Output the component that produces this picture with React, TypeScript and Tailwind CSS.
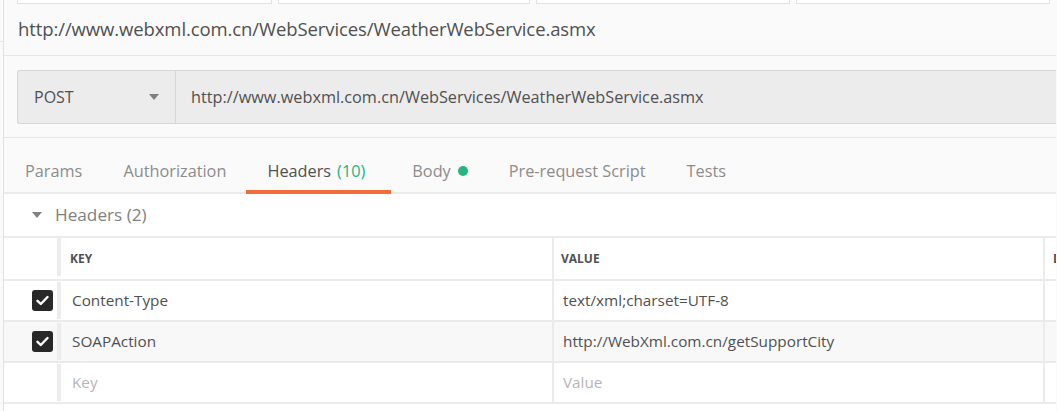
import React from "react";

const font = { fontFamily: '"Open Sans", "Noto Sans", sans-serif' };

function Check() {
  return (
    <div className="w-[21px] h-[21px] rounded-[3px] bg-[#282828] flex items-center justify-center">
      <svg width="13" height="11" viewBox="0 0 13 11">
        <path d="M1.5 5.8 L4.8 9 L11.5 2" stroke="#fff" strokeWidth="2.4" fill="none" strokeLinecap="round" strokeLinejoin="round" />
      </svg>
    </div>
  );
}

function Row({
  checked,
  k,
  v,
  placeholder,
  hover,
}: {
  checked?: boolean;
  k: string;
  v: string;
  placeholder?: boolean;
  hover?: boolean;
}) {
  const txt = placeholder ? "text-[#b5b5b5]" : "text-[#505050]";
  return (
    <div className={`flex h-[41px] border-b-2 border-[#ebebeb] ${hover ? "bg-[#f8f8f8]" : "bg-white"}`}>
      <div className="w-[53px] flex items-center justify-end pr-[4px] shrink-0">{checked ? <Check /> : null}</div>
      <div className="w-[4px] shrink-0 bg-[#ececec] my-[1px]" />
      <div className={`w-[491px] shrink-0 flex items-center pl-[11px] text-[15.3px] ${txt}`}>{k}</div>
      <div className="w-[2px] shrink-0 bg-[#ebebeb]" />
      <div className={`w-[489px] shrink-0 flex items-center pl-[9px] text-[15.3px] ${txt}`}>{v}</div>
      <div className="w-[2px] shrink-0 bg-[#ebebeb]" />
      <div className="flex-1" />
    </div>
  );
}

export default function App() {
  return (
    <div className="w-[1057px] h-[411px] overflow-hidden bg-[#fafafa] flex" style={font}>
      <div className="w-[4px] shrink-0 bg-[#fafafa] border-r border-[#e2e2e2] relative">
        <div className="h-[42px] border-b border-[#e6e6e6]" />
      </div>
      <div className="w-[1052px] shrink-0 flex flex-col">
        {/* top strip */}
        <div className="h-[4px] flex gap-[6px] pl-[13px]">
          <div className="w-[255px] bg-white border-x border-b border-[#e2e2e2]" />
          <div className="w-[252px] bg-white border-x border-b border-[#e2e2e2]" />
          <div className="w-[254px] bg-white border-x border-b border-[#e2e2e2]" />
          <div className="w-[254px] bg-white border-x border-b border-[#e2e2e2]" />
        </div>
        {/* title */}
        <div className="h-[52px] border-b border-[#e6e6e6] flex items-center pl-[14px] pb-[1px]">
          <span className="text-[18.5px] text-[#505050] tracking-[-0.1px]">
            http://www.webxml.com.cn/WebServices/WeatherWebService.asmx
          </span>
        </div>
        {/* url bar */}
        <div className="h-[82px] border-b border-[#e6e6e6] pt-[14px] pl-[13px]">
          <div className="h-[54px] flex border border-[#d6d6d6] rounded-l-[3px] bg-[#ececec] border-r-0">
            <div className="w-[158px] flex items-center pl-[16px] pr-[16px] border-r border-[#d6d6d6] justify-between">
              <span className="text-[16px] text-[#505050]">POST</span>
              <svg width="10" height="6" viewBox="0 0 10 6">
                <path d="M0 0 L10 0 L5 6 Z" fill="#808080" />
              </svg>
            </div>
            <div className="flex-1 flex items-center pl-[15px]">
              <span className="text-[16.25px] text-[#505050]">
                http://www.webxml.com.cn/WebServices/WeatherWebService.asmx
              </span>
            </div>
          </div>
        </div>
        {/* tabs */}
        <div className="h-[56px] border-b-2 border-[#ebebeb] flex items-end">
          {[
            { t: "Params" },
            { t: "Authorization" },
            { t: "Headers", active: true },
            { t: "Body", dot: true },
            { t: "Pre-request Script" },
            { t: "Tests" },
          ].map((tab) => (
            <div
              key={tab.t}
              className={`h-[42px] -mb-[2px] pl-[21px] flex items-center text-[16.3px] border-b-[4px] ${
                tab.active ? "pr-[26px] border-[#f26b3a] text-[#505050]" : "pr-[20px] border-transparent text-[#8c8c8c]"
              }`}
            >
              <span className="flex items-center leading-[24px]">
                {tab.t}
                {tab.active ? <span className="text-[#26b47f] ml-[6px]">(10)</span> : null}
                {tab.dot ? <span className="ml-[7px] w-[10px] h-[10px] rounded-full bg-[#26b47f] inline-block" /> : null}
              </span>
            </div>
          ))}
        </div>
        {/* headers section */}
        <div className="bg-white flex-1 flex flex-col">
          <div className="h-[44px] flex items-center pl-[28px] border-b-2 border-[#ebebeb]">
            <svg width="10" height="6" viewBox="0 0 10 6" className="mr-[13px]">
              <path d="M0 0 L10 0 L5 6 Z" fill="#808080" />
            </svg>
            <span className="text-[17.2px] text-[#808080]">Headers (2)</span>
          </div>
          <div className="flex h-[43px] border-b-2 border-[#ebebeb]">
            <div className="w-[53px] shrink-0" />
            <div className="w-[4px] shrink-0 bg-[#ececec] mb-[3px]" />
            <div className="w-[491px] shrink-0 flex items-center pl-[9px] pt-[1px] text-[12px] font-bold text-[#505050]">KEY</div>
            <div className="w-[2px] shrink-0 bg-[#ebebeb]" />
            <div className="w-[489px] shrink-0 flex items-center pl-[7px] pt-[1px] text-[12px] font-bold text-[#505050]">VALUE</div>
            <div className="w-[2px] shrink-0 bg-[#ebebeb]" />
            <div className="w-[11px] overflow-hidden flex items-center pl-[8px] pt-[1px] text-[12px] font-bold text-[#505050] whitespace-nowrap">D</div>
          </div>
          <Row checked k="Content-Type" v="text/xml;charset=UTF-8" />
          <Row checked hover k="SOAPAction" v="http://WebXml.com.cn/getSupportCity" />
          <Row placeholder k="Key" v="Value" />
        </div>
      </div>
    </div>
  );
}
